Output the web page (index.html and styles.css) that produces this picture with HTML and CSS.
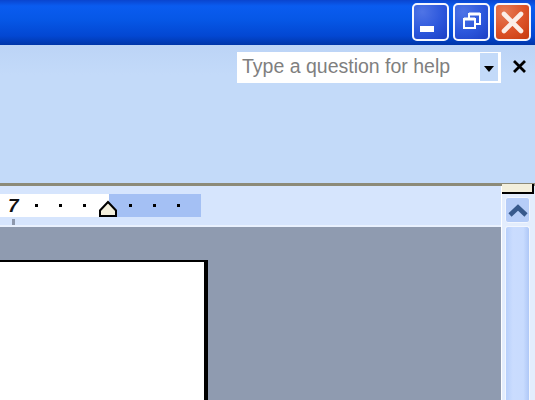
FILE: index.html
```html
<!DOCTYPE html>
<html lang="en">
<head>
    <meta charset="UTF-8">
    <title>Document</title>
    <link rel="stylesheet" href="styles.css">
</head>
<body>

    <!-- Title bar -->
    <div class="titlebar">
        <div class="win-btn">
            <svg width="33" height="34" viewBox="0 0 33 34"><rect x="6" y="21" width="14" height="6" fill="#fff"/></svg>
        </div>
        <div class="win-btn">
            <svg width="33" height="34" viewBox="0 0 33 34"><path d="M14 13V9h11v10h-4" fill="none" stroke="#fff" stroke-width="2"/><rect x="9" y="14" width="11" height="9" fill="none" stroke="#fff" stroke-width="2"/><path d="M14 9h11M9 14h11" stroke="#fff" stroke-width="3" fill="none"/></svg>
        </div>
        <div class="win-btn close">
            <svg width="33" height="34" viewBox="0 0 33 34"><path d="M8 9L25 26M25 9L8 26" stroke="#fbeee8" stroke-width="4.6" stroke-linecap="round"/></svg>
        </div>
    </div>

    <!-- Menu and toolbars -->
    <div class="toolbar">
        <div class="help-box">
            <span class="help-text">Type a question for help</span>
            <span class="help-arrow"><i class="arrow-down"></i></span>
        </div>
        <svg class="close-doc" width="15" height="13" viewBox="0 0 15 13"><path d="M2 1L13 12M13 1L2 12" stroke="#000" stroke-width="2.8"/></svg>
    </div>

    <div class="rule"></div>

    <!-- Ruler and page -->
    <div class="workspace">
        <div class="main">
            <div class="ruler-row">
                <div class="ruler">
                    <div class="ruler-on">
                        <span class="num">7</span>
                        <i class="dot"></i><i class="dot"></i><i class="dot"></i>
                    </div>
                    <div class="ruler-off">
                        <i class="dot"></i><i class="dot"></i><i class="dot"></i>
                    </div>
                    <svg class="indent" width="18" height="18" viewBox="0 0 18 18"><path d="M1 16V10.5L9 2L17 10.5V16Z" fill="#f3efdc" stroke="#000" stroke-width="2"/></svg>
                </div>
                <i class="tick"></i>
            </div>
            <div class="canvas">
                <div class="page"></div>
            </div>
        </div>
        <div class="scrollbar">
            <div class="split"></div>
            <div class="scroll-up">
                <svg width="20" height="16" viewBox="0 0 20 16"><path d="M2 13L10 5.5L18 13" fill="none" stroke="#37598c" stroke-width="4.6"/></svg>
            </div>
            <div class="scroll-track"></div>
        </div>
    </div>

</body>
</html>
```

FILE: styles.css
```css
html, body {
    margin: 0;
    height: 400px;
    overflow: hidden;
}

body {
    display: flex;
    flex-direction: column;
    background: #c3daf9;
    font-family: "Liberation Sans", Arial, sans-serif;
}

.titlebar {
    height: 45px;
    flex: none;
    display: flex;
    justify-content: flex-end;
    align-items: flex-start;
    gap: 4px;
    padding: 3px 4px 0 0;
    box-sizing: border-box;
    background: linear-gradient(to bottom, #0a45cf 0, #0a5cf0 6px, #0657e6 20px, #0347d2 36px, #0036a8 45px);
}

.win-btn {
    width: 37px;
    height: 38px;
    box-sizing: border-box;
    border: 2px solid #f4f6fe;
    border-radius: 5px;
    display: flex;
    align-items: center;
    justify-content: center;
    background: radial-gradient(circle at 25% 20%, #4f74e6, #2c57dc 55%, #1c3fc4);
}

.win-btn.close {
    background: radial-gradient(circle at 25% 20%, #e57b56, #dc5228 55%, #c63a10);
}

.toolbar {
    height: 138px;
    flex: none;
    display: flex;
    justify-content: flex-end;
    align-items: flex-start;
    padding: 7px 8px 0 0;
    box-sizing: border-box;
    background: linear-gradient(to bottom, #bcd4f6 0, #c3daf9 30px, #c3daf9);
}

.help-box {
    width: 264px;
    height: 31px;
    display: flex;
    box-sizing: border-box;
    padding: 1px 3px 2px 0;
    background: #fff;
}

.help-text {
    flex: 1;
    font-size: 19.5px;
    line-height: 26px;
    padding-left: 5px;
    color: #7f7f7f;
    white-space: nowrap;
}

.help-arrow {
    width: 18px;
    background: #c3daf9;
    display: flex;
    align-items: center;
    justify-content: center;
}

.arrow-down {
    width: 0;
    height: 0;
    border-left: 5px solid transparent;
    border-right: 5px solid transparent;
    border-top: 6px solid #000;
    margin-top: 3px;
}

.close-doc {
    margin: 8px 0 0 11px;
}

.rule {
    height: 3px;
    flex: none;
    background: #8c8a78;
}

.workspace {
    flex: 1;
    display: flex;
    min-height: 0;
}

.main {
    flex: 1;
    display: flex;
    flex-direction: column;
}

.ruler-row {
    height: 41px;
    flex: none;
    background: #d6e5fd;
    box-sizing: border-box;
    padding-top: 8px;
    border-bottom: 2px solid #e9f1fe;
}

.ruler {
    width: 201px;
    height: 23px;
    display: flex;
    position: relative;
}

.ruler-on {
    width: 110px;
    background: #fff;
    display: flex;
    align-items: center;
    padding-left: 8px;
    box-sizing: border-box;
}

.ruler-off {
    flex: 1;
    background: #a4c0f4;
    display: flex;
    align-items: center;
    padding-left: 20px;
}

.num {
    font-size: 19px;
    font-weight: bold;
    font-style: italic;
    width: 27px;
    color: #111;
}

.dot {
    width: 3px;
    height: 3px;
    background: #000;
    margin-right: 21px;
}

.indent {
    position: absolute;
    left: 99px;
    top: 6px;
}

.tick {
    display: block;
    width: 3px;
    height: 6px;
    margin: 2px 0 0 12px;
    background: #8d98ad;
}

.canvas {
    flex: 1;
    min-height: 0;
    display: flex;
    background: #8f9bb0;
    padding-top: 33px;
}

.page {
    width: 208px;
    box-sizing: border-box;
    background: #fff;
    border-top: 2px solid #000;
    border-right: 4px solid #000;
}

.scrollbar {
    width: 34px;
    flex: none;
    display: flex;
    flex-direction: column;
    background: #e3edfd;
    border-left: 1px solid #fff;
    box-sizing: border-box;
}

.split {
    height: 10px;
    width: 32px;
    flex: none;
    margin-top: -2px;
    box-sizing: border-box;
    background: #f3efdc;
    border-right: 2px solid #000;
    border-bottom: 2px solid #000;
}

.scroll-up {
    width: 25px;
    height: 26px;
    flex: none;
    margin: 3px 0 0 3px;
    box-sizing: border-box;
    border: 1px solid #f2f6fe;
    border-radius: 3px;
    background: #b6cdf8;
    display: flex;
    align-items: center;
    justify-content: center;
}

.scroll-track {
    width: 25px;
    flex: 1;
    margin: 3px 0 0 3px;
    box-sizing: border-box;
    border: 1px solid #f2f6fe;
    border-bottom: 0;
    border-radius: 3px 3px 0 0;
    background: linear-gradient(to right, #b8d0fb, #cadcfe 30%, #c8dbfe 75%, #afc8f7);
}
```
